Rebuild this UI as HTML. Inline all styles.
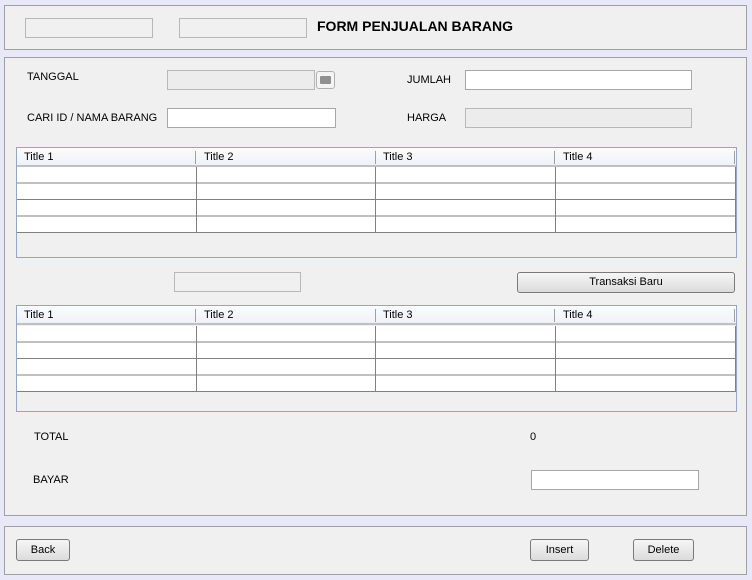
<!DOCTYPE html>
<html><head><style>
body{margin:0;width:752px;height:580px;background:#e8e8f8;font-family:"Liberation Sans",sans-serif;font-size:11px;position:relative;overflow:hidden;color:#000}
div{position:absolute;box-sizing:border-box}
.p{background:#f0f0f0;border:1px solid #a0a0a0}
.f{background:#fff;border:1px solid #a8a8a8}
.d{background:#ececec;border:1px solid #b8b8b8}
.l{font-size:11px}
.b{background:linear-gradient(#f6f6f6,#dcdcdc);border:1px solid #7a7a7a;border-radius:3px;text-align:center;font-size:11px}
.t{background:#f0f0f0;border:1px solid #90a8c8}
.h{background:linear-gradient(#fbfcfe,#eef2f8);border-bottom:2px solid #c0c0c0;height:19px}
.hc{top:0;height:19px;line-height:19px;padding-left:7px;font-size:11px}
.hs{top:3px;width:1px;height:13px;background:#a0a0a0}
</style></head><body>
<div class="p" style="left:4px;top:5px;width:743px;height:45px"></div>
<div class="d" style="left:25px;top:18px;width:128px;height:20px;background:#f0f0f0"></div>
<div class="d" style="left:179px;top:18px;width:128px;height:20px;background:#f0f0f0"></div>
<div style="left:317px;top:18px;font-weight:bold;font-size:14px;font-family:'Liberation Sans',sans-serif">FORM PENJUALAN BARANG</div>

<div class="p" style="left:4px;top:57px;width:743px;height:459px"></div>
<div class="l" style="left:27px;top:71px">TANGGAL</div>
<div class="d" style="left:167px;top:70px;width:148px;height:20px"></div>
<div style="left:316px;top:71px;width:19px;height:18px;border:1px solid #b0b0b0;border-radius:3px;background:#f4f4f4"><div style="left:3px;top:4px;width:11px;height:8px;background:#909090;border-radius:1px"></div></div>
<div class="l" style="left:27px;top:112px">CARI ID / NAMA BARANG</div>
<div class="f" style="left:167px;top:108px;width:169px;height:20px"></div>
<div class="l" style="left:407px;top:74px">JUMLAH</div>
<div class="f" style="left:465px;top:70px;width:227px;height:20px"></div>
<div class="l" style="left:407px;top:112px">HARGA</div>
<div class="d" style="left:465px;top:108px;width:227px;height:20px"></div>

<div class="t" style="left:16px;top:147px;width:721px;height:111px">
<div class="h" style="left:0;top:0;width:719px"></div>
<div class="hc" style="left:0">Title 1</div><div class="hs" style="left:178px"></div>
<div class="hc" style="left:180px">Title 2</div><div class="hs" style="left:358px"></div>
<div class="hc" style="left:359px">Title 3</div><div class="hs" style="left:537px"></div>
<div class="hc" style="left:539px">Title 4</div><div class="hs" style="left:717px"></div>
<div style="left:0;top:19px;width:719px;height:66px;background:#fff">
<div style="left:0;top:0;width:719px;height:66px;background:repeating-linear-gradient(#fff 0 15.5px,#808080 15.5px 16.5px)"></div>
<div style="left:179px;top:0;width:1px;height:66px;background:#808080"></div>
<div style="left:358px;top:0;width:1px;height:66px;background:#808080"></div>
<div style="left:538px;top:0;width:1px;height:66px;background:#808080"></div>
<div style="left:718px;top:0;width:1px;height:66px;background:#808080"></div>
</div></div>

<div class="d" style="left:174px;top:272px;width:127px;height:20px;background:#f0f0f0"></div>
<div class="b" style="left:517px;top:272px;width:218px;height:21px;line-height:19px">Transaksi Baru</div>

<div class="t" style="left:16px;top:305px;width:721px;height:107px">
<div class="h" style="left:0;top:0;width:719px"></div>
<div class="hc" style="left:0">Title 1</div><div class="hs" style="left:178px"></div>
<div class="hc" style="left:180px">Title 2</div><div class="hs" style="left:358px"></div>
<div class="hc" style="left:359px">Title 3</div><div class="hs" style="left:537px"></div>
<div class="hc" style="left:539px">Title 4</div><div class="hs" style="left:717px"></div>
<div style="left:0;top:20px;width:719px;height:66px;background:#fff">
<div style="left:0;top:0;width:719px;height:66px;background:repeating-linear-gradient(#fff 0 15.5px,#808080 15.5px 16.5px)"></div>
<div style="left:179px;top:0;width:1px;height:66px;background:#808080"></div>
<div style="left:358px;top:0;width:1px;height:66px;background:#808080"></div>
<div style="left:538px;top:0;width:1px;height:66px;background:#808080"></div>
<div style="left:718px;top:0;width:1px;height:66px;background:#808080"></div>
</div></div>

<div class="l" style="left:34px;top:431px">TOTAL</div>
<div class="l" style="left:530px;top:431px">0</div>
<div class="l" style="left:33px;top:474px">BAYAR</div>
<div class="f" style="left:531px;top:470px;width:168px;height:20px"></div>

<div class="p" style="left:4px;top:526px;width:743px;height:49px"></div>
<div class="b" style="left:16px;top:539px;width:54px;height:22px;line-height:20px">Back</div>
<div class="b" style="left:530px;top:539px;width:59px;height:22px;line-height:20px">Insert</div>
<div class="b" style="left:633px;top:539px;width:61px;height:22px;line-height:20px">Delete</div>
</body></html>
